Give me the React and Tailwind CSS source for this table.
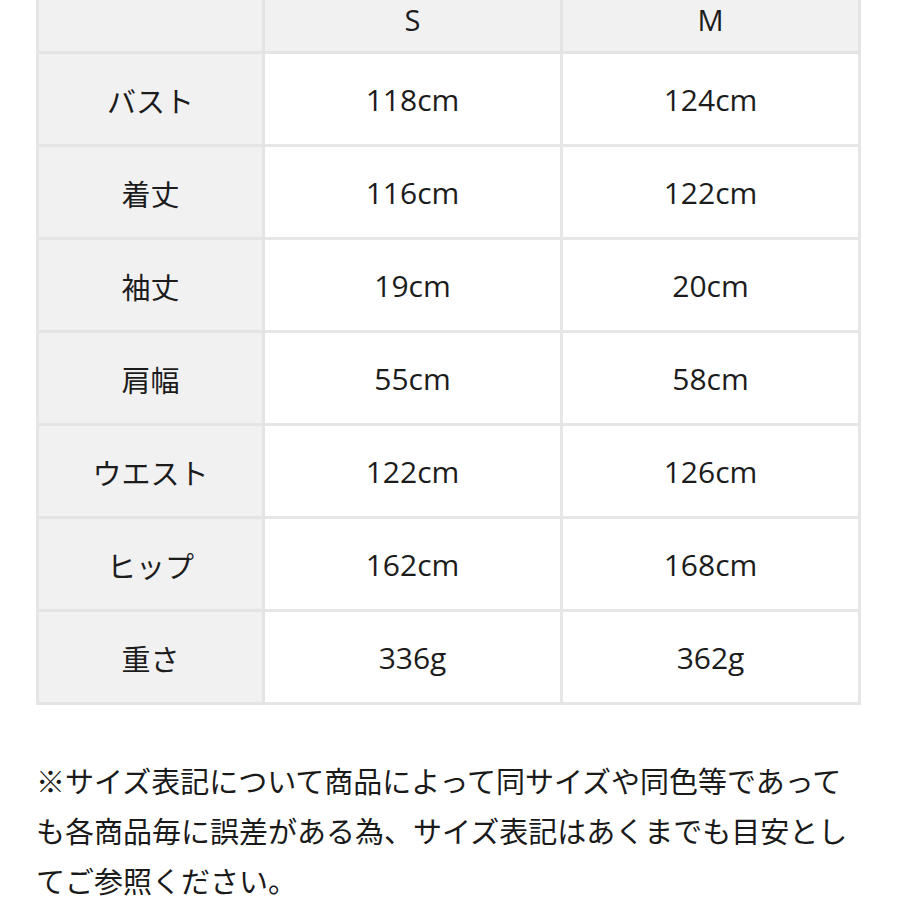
const rows = [
  ['バスト', '118cm', '124cm'],
  ['着丈', '116cm', '122cm'],
  ['袖丈', '19cm', '20cm'],
  ['肩幅', '55cm', '58cm'],
  ['ウエスト', '122cm', '126cm'],
  ['ヒップ', '162cm', '168cm'],
  ['重さ', '336g', '362g'],
]

const jp = { fontFamily: '"Noto Sans CJK JP", sans-serif' }
const num = { fontFamily: '"Open Sans", "Noto Sans CJK JP", sans-serif' }

export default function App() {
  return (
    <div className="w-[900px] h-[900px] overflow-hidden bg-white text-[#1c1c1c]" style={jp}>
      <div className="ml-[36px] w-[822px] border-l-[3px] border-[#e6e6e6]">
        {/* header */}
        <div className="grid grid-cols-[226px_298px_298px] h-[54px] bg-[#f1f1f1]" style={num}>
          <div className="border-r-[3px] border-b-[3px] border-[#e4e4e4]" />
          <div className="flex items-start justify-center border-r-[3px] border-b-[3px] border-[#e4e4e4] text-[29px] leading-[40px]">S</div>
          <div className="flex items-start justify-center border-r-[3px] border-b-[3px] border-[#e4e4e4] text-[29px] leading-[40px]">M</div>
        </div>
        {rows.map(r => (
          <div key={r[0]} className="grid grid-cols-[226px_298px_298px] h-[93px]">
            <div className="flex items-center justify-center bg-[#f1f1f1] border-r-[3px] border-b-[3px] border-[#e4e4e4] text-[29px] pt-[4px]">{r[0]}</div>
            <div style={num} className="flex items-center justify-center border-r-[3px] border-b-[3px] border-[#e6e6e6] text-[30px]">{r[1]}</div>
            <div style={num} className="flex items-center justify-center border-r-[3px] border-b-[3px] border-[#e6e6e6] text-[30px]">{r[2]}</div>
          </div>
        ))}
      </div>
      <p className="ml-[36px] w-[822px] mt-[50px] text-[29px] leading-[50px] text-[#1a1a1a]">
        ※サイズ表記について商品によって同サイズや同色等であっても各商品毎に誤差がある為、サイズ表記はあくまでも目安としてご参照ください。
      </p>
    </div>
  )
}
